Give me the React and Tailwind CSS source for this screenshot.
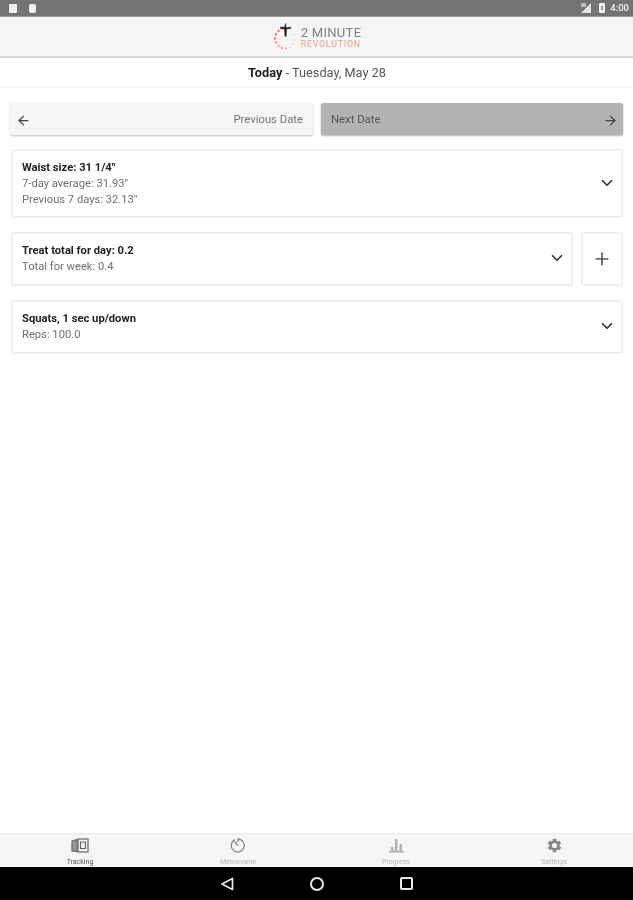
import { ArrowLeft, ArrowRight, ChevronDown, Plus } from "lucide-react";

const font = { fontFamily: '"Roboto", "Liberation Sans", sans-serif' };

function Logo() {
  // ring of dots, orange on the left fading to gray on the right
  const dots = [
    [10, 5.5, "#e8704a"],
    [6.5, 8, "#e8704a"],
    [4, 11.5, "#e8704a"],
    [3, 15.5, "#e8704a"],
    [4, 19.5, "#ee8a68"],
    [6.5, 23, "#f0a088"],
    [10, 25, "#f0a088"],
    [14, 25.5, "#f0b8a6"],
    [18, 24.5, "#e6d8d2"],
    [21, 21, "#e0e0e0"],
    [22.5, 17, "#e0e0e0"],
    [22.5, 12.5, "#e6e6e6"],
  ];
  return (
    <svg width="24" height="28" viewBox="0 0 24 28">
      {dots.map(([cx, cy, fill], i) => (
        <circle key={i} cx={cx} cy={cy} r="1.15" fill={fill} />
      ))}
      <path d="M13.6 0.5 L14 5 L18.5 4 L18.5 5.4 L14.4 6 L14.2 13.5 L13 13 L12.6 6 L8.5 5.4 L8.5 4 L12.4 4.4 Z" fill="#111111" stroke="#111111" strokeWidth="0.5" />
    </svg>
  );
}

function Card({ title, lines, className }) {
  return (
    <div className={`flex items-center justify-between rounded-[3px] border-2 border-[#f0f0f0] bg-white pl-[9px] pr-[5px] ${className}`}>
      <div className="text-[11.2px] leading-[16px] text-[#707070]">
        <div className="font-bold text-[#222222]">{title}</div>
        {lines.map((line) => (
          <div key={line}>{line}</div>
        ))}
      </div>
      <ChevronDown size={18} strokeWidth={2.2} className="mb-[2px] text-[#333333]" />
    </div>
  );
}

function NavItem({ icon, label, active }) {
  return (
    <div className="flex flex-1 flex-col items-center">
      <div className="flex h-[20px] items-center">{icon}</div>
      <span className={`mt-[3px] text-[7px] leading-[9px] ${active ? "text-[#555555]" : "text-[#b5b5b5]"}`}>{label}</span>
    </div>
  );
}

export default function App() {
  return (
    <div style={font} className="flex h-[900px] w-[633px] flex-col overflow-hidden bg-white blur-[0.4px]">
      {/* Status bar */}
      <div className="flex h-[17px] items-center justify-between border-b border-[#9a9a9a] bg-[#737373] pl-[9px] pr-[4px]">
        <div className="flex gap-[12px]">
          <div className="h-[9px] w-[8px] rounded-[1px] bg-[#f0f0f0]" />
          <div className="h-[9px] w-[7px] rounded-[2px] bg-[#f0f0f0]" />
        </div>
        <div className="flex items-center">
          <svg width="11" height="10" viewBox="0 0 11 10">
            <path d="M0 10 L10 0 V10 Z" fill="#e5e5e5" />
            <path d="M0 0 H5 V4 H0 Z" fill="#bdbdbd" />
          </svg>
          <div className="ml-[7px] flex h-[10px] w-[6px] items-center justify-center rounded-[1px] bg-[#f0f0f0]">
            <div className="h-[4px] w-[2px] bg-[#999999]" />
          </div>
          <span className="ml-[5px] text-[9.5px] font-medium text-[#f0f0f0]">4:00</span>
        </div>
      </div>

      {/* Header */}
      <div className="flex h-[41px] items-center justify-center gap-[5px] border-b-2 border-[#d4d4d4] bg-[#f5f5f5]">
        <Logo />
        <div className="mt-[3px] flex flex-col">
          <span className="text-[13px] leading-[12px] tracking-[0.3px] text-[#808080]">2 MINUTE</span>
          <span className="text-[8.8px] leading-[10px] tracking-[0.8px] text-[#ee9a88]">REVOLUTION</span>
        </div>
      </div>

      {/* Date */}
      <div className="flex h-[30px] items-center justify-center border-b border-[#f5f5f5] pl-[1px] text-[12.75px] text-[#555555]">
        <span className="font-bold text-[#222222]">Today</span>
        <span>&nbsp;- Tuesday, May 28</span>
      </div>

      {/* Content */}
      <div className="flex flex-1 flex-col pl-[11px] pr-[10px] pt-[15px]">
        <div className="-ml-[1px] flex gap-[8px]">
          <div className="flex h-[32px] flex-1 items-center justify-between rounded-[2px] bg-[#f5f5f5] pl-[6px] pr-[10px] pt-[2px] shadow-[0_1px_2px_rgba(0,0,0,0.25)]">
            <ArrowLeft size={15} className="text-[#444444]" />
            <span className="text-[11.3px] text-[#757575]">Previous Date</span>
          </div>
          <div className="flex h-[32px] flex-1 items-center justify-between rounded-[2px] bg-[#b3b3b3] pl-[10px] pr-[5px] pt-[2px] shadow-[0_1px_2px_rgba(0,0,0,0.3)]">
            <span className="text-[11.3px] text-[#555555]">Next Date</span>
            <ArrowRight size={15} className="text-[#444444]" />
          </div>
        </div>

        <Card
          className="mt-[14px] h-[69px]"
          title={'Waist size: 31 1/4"'}
          lines={['7-day average: 31.93"', 'Previous 7 days: 32.13"']}
        />

        <div className="mt-[14px] flex gap-[8px]">
          <Card
            className="h-[54px] flex-1"
            title="Treat total for day: 0.2"
            lines={["Total for week: 0.4"]}
          />
          <div className="flex h-[54px] w-[42px] items-center justify-center rounded-[3px] border-2 border-[#f0f0f0] bg-white">
            <Plus size={20} className="text-[#555555]" />
          </div>
        </div>

        <Card
          className="mt-[14px] h-[54px]"
          title="Squats, 1 sec up/down"
          lines={["Reps: 100.0"]}
        />
      </div>

      {/* Bottom nav */}
      <div className="flex h-[34px] border-t border-[#e8e8e8] bg-[#f5f5f5] pl-[1px] pt-[1px]">
        <NavItem
          active
          label="Tracking"
          icon={
            <svg width="18" height="15" viewBox="0 0 18 15" fill="none" stroke="#666666" strokeWidth="1.2">
              <path d="M1 3 L6 1.5 V13.5 L1 13 Z" fill="#999999" />
              <rect x="7" y="1" width="10" height="13" />
              <path d="M9.5 4 H14.5 V10.5 H9.5 Z" />
            </svg>
          }
        />
        <NavItem
          label="Metronome"
          icon={
            <svg width="16" height="16" viewBox="0 0 16 16" fill="none" stroke="#888888" strokeWidth="1.3">
              <path d="M5 2.6 A6.5 6.5 0 1 0 8 2 V5" />
              <path d="M4.5 4.5 L8 8.5" />
            </svg>
          }
        />
        <NavItem
          label="Progress"
          icon={
            <svg width="15" height="15" viewBox="0 0 15 15" fill="#b0b0b0">
              <rect x="0" y="13" width="15" height="1.5" />
              <rect x="2" y="9" width="2.5" height="4" />
              <rect x="6" y="1" width="2.5" height="12" />
              <rect x="10.5" y="6" width="2.5" height="7" />
            </svg>
          }
        />
        <NavItem
          label="Settings"
          icon={
            <svg width="17" height="17" viewBox="0 0 24 24" fill="#888888">
              <path d="M19.14 12.94c.04-.3.06-.61.06-.94s-.02-.64-.07-.94l2.03-1.58a.49.49 0 0 0 .12-.61l-1.92-3.32a.49.49 0 0 0-.59-.22l-2.39.96a7 7 0 0 0-1.62-.94l-.36-2.54a.48.48 0 0 0-.48-.41h-3.84a.48.48 0 0 0-.47.41l-.36 2.54c-.59.24-1.13.57-1.62.94l-2.39-.96a.49.49 0 0 0-.59.22L2.74 8.87a.48.48 0 0 0 .12.61l2.03 1.58c-.05.3-.09.63-.09.94s.02.64.07.94l-2.03 1.58a.49.49 0 0 0-.12.61l1.92 3.32c.12.22.37.29.59.22l2.39-.96c.5.38 1.03.7 1.62.94l.36 2.54c.05.24.24.41.48.41h3.84c.24 0 .44-.17.47-.41l.36-2.54c.59-.24 1.13-.56 1.62-.94l2.39.96c.22.08.47 0 .59-.22l1.92-3.32a.48.48 0 0 0-.12-.61l-2.01-1.58zM12 15.6A3.6 3.6 0 1 1 12 8.4a3.6 3.6 0 0 1 0 7.2z" />
            </svg>
          }
        />
      </div>

      {/* Android nav */}
      <div className="flex h-[33px] items-center justify-center bg-black">
        <div className="flex w-[90px] justify-center">
          <svg width="14" height="14" viewBox="0 0 14 14" fill="none" stroke="#e8e8e8" strokeWidth="1.7" strokeLinejoin="round">
            <path d="M12.5 1.5 V12.5 L2 7 Z" />
          </svg>
        </div>
        <div className="flex w-[90px] justify-center">
          <div className="h-[14px] w-[14px] rounded-full border-2 border-[#e8e8e8]" />
        </div>
        <div className="flex w-[90px] justify-center">
          <div className="h-[13px] w-[13px] rounded-[2px] border-2 border-[#e8e8e8]" />
        </div>
      </div>
    </div>
  );
}
